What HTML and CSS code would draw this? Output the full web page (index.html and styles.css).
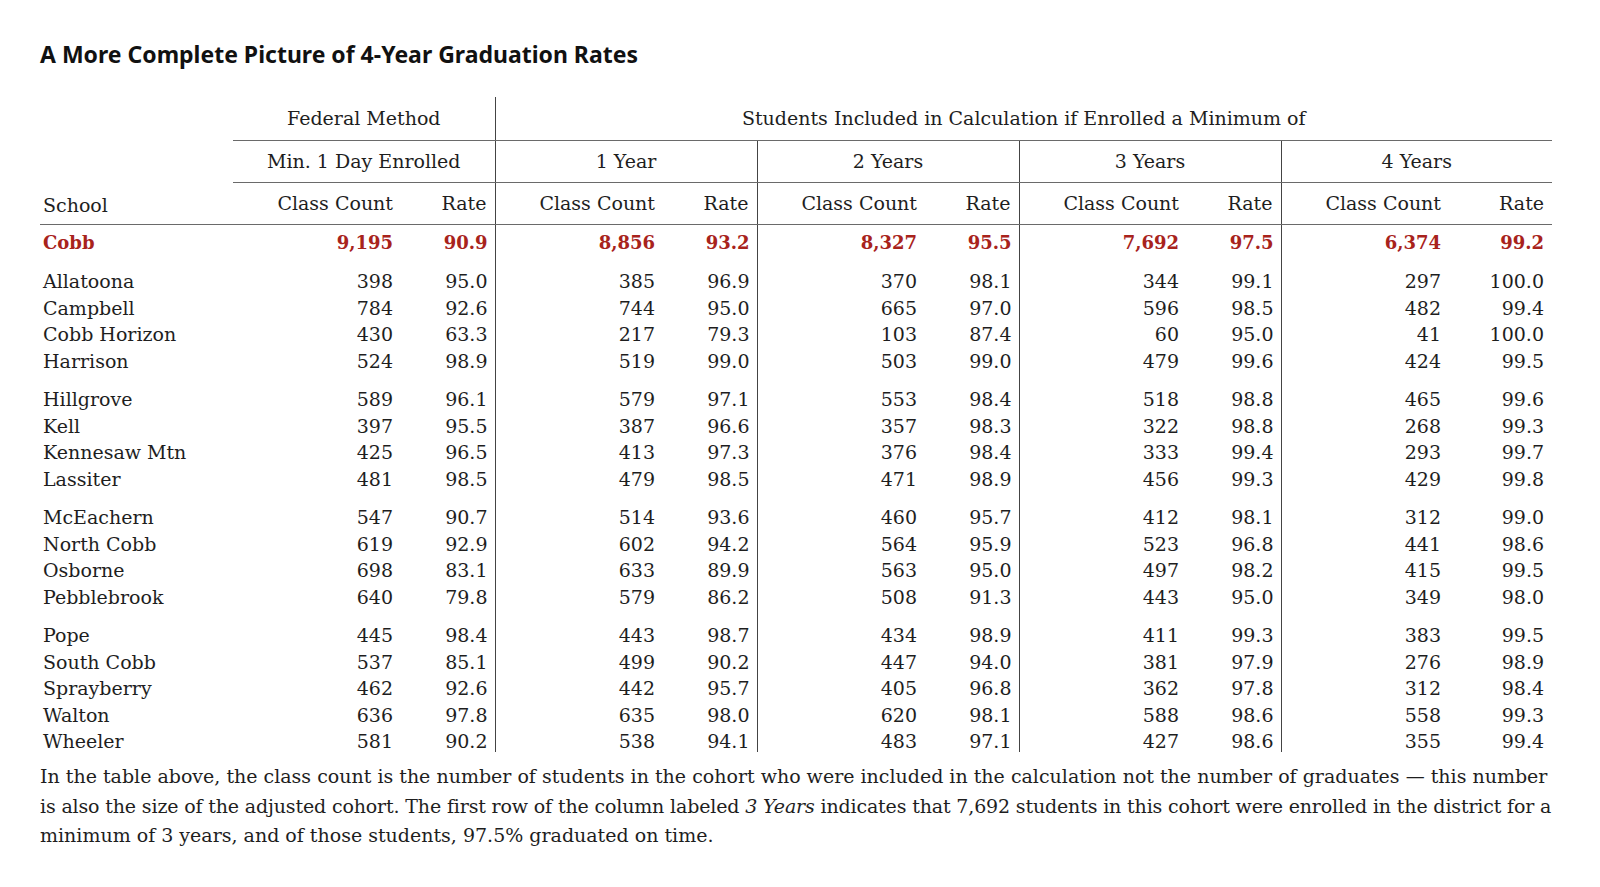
FILE: index.html
```html
<!DOCTYPE html>
<html lang="en">
  <head>
    <meta charset="UTF-8" />
    <title>A More Complete Picture of 4-Year Graduation Rates</title>
    <link rel="stylesheet" href="styles.css">
  </head>
  <body>
    <div class="page">
      <h1>A More Complete Picture of 4-Year Graduation Rates</h1>

      <table class="grad-table">
        <colgroup>
          <col class="c-school">
          <col class="c-count"><col class="c-rate">
          <col class="c-count"><col class="c-rate">
          <col class="c-count"><col class="c-rate">
          <col class="c-count"><col class="c-rate">
          <col class="c-count"><col class="c-rate-last">
        </colgroup>
        <thead>
          <tr class="h1">
            <th class="school" rowspan="3">School</th>
            <th class="grp sep" colspan="2">Federal Method</th>
            <th class="grp" colspan="8">Students Included in Calculation if Enrolled a Minimum of</th>
          </tr>
          <tr class="h2">
            <th class="grp sep" colspan="2">Min. 1 Day Enrolled</th>
            <th class="grp sep" colspan="2">1 Year</th>
            <th class="grp sep" colspan="2">2 Years</th>
            <th class="grp sep" colspan="2">3 Years</th>
            <th class="grp" colspan="2">4 Years</th>
          </tr>
          <tr class="h3">
            <th class="num">Class Count</th><th class="num sep">Rate</th>
            <th class="num">Class Count</th><th class="num sep">Rate</th>
            <th class="num">Class Count</th><th class="num sep">Rate</th>
            <th class="num">Class Count</th><th class="num sep">Rate</th>
            <th class="num">Class Count</th><th class="num">Rate</th>
          </tr>
        </thead>
        <tbody id="rows"></tbody>
      </table>

      <p class="note">In the table above, the class count is the number of students in the cohort who were included in the calculation not the number of graduates — this number<br><span class="tight">is also the size of the adjusted cohort. The first row of the column labeled <em>3 Years</em> indicates that 7,692 students in this cohort were enrolled in the district for a</span><br>minimum of 3 years, and of those students, 97.5% graduated on time.</p>
    </div>

    <script>
      // school, then count/rate pairs for each of the 5 methods
      const data = [
        ["Cobb", "9,195", "90.9", "8,856", "93.2", "8,327", "95.5", "7,692", "97.5", "6,374", "99.2"],
        ["Allatoona", "398", "95.0", "385", "96.9", "370", "98.1", "344", "99.1", "297", "100.0"],
        ["Campbell", "784", "92.6", "744", "95.0", "665", "97.0", "596", "98.5", "482", "99.4"],
        ["Cobb Horizon", "430", "63.3", "217", "79.3", "103", "87.4", "60", "95.0", "41", "100.0"],
        ["Harrison", "524", "98.9", "519", "99.0", "503", "99.0", "479", "99.6", "424", "99.5"],
        ["Hillgrove", "589", "96.1", "579", "97.1", "553", "98.4", "518", "98.8", "465", "99.6"],
        ["Kell", "397", "95.5", "387", "96.6", "357", "98.3", "322", "98.8", "268", "99.3"],
        ["Kennesaw Mtn", "425", "96.5", "413", "97.3", "376", "98.4", "333", "99.4", "293", "99.7"],
        ["Lassiter", "481", "98.5", "479", "98.5", "471", "98.9", "456", "99.3", "429", "99.8"],
        ["McEachern", "547", "90.7", "514", "93.6", "460", "95.7", "412", "98.1", "312", "99.0"],
        ["North Cobb", "619", "92.9", "602", "94.2", "564", "95.9", "523", "96.8", "441", "98.6"],
        ["Osborne", "698", "83.1", "633", "89.9", "563", "95.0", "497", "98.2", "415", "99.5"],
        ["Pebblebrook", "640", "79.8", "579", "86.2", "508", "91.3", "443", "95.0", "349", "98.0"],
        ["Pope", "445", "98.4", "443", "98.7", "434", "98.9", "411", "99.3", "383", "99.5"],
        ["South Cobb", "537", "85.1", "499", "90.2", "447", "94.0", "381", "97.9", "276", "98.9"],
        ["Sprayberry", "462", "92.6", "442", "95.7", "405", "96.8", "362", "97.8", "312", "98.4"],
        ["Walton", "636", "97.8", "635", "98.0", "620", "98.1", "588", "98.6", "558", "99.3"],
        ["Wheeler", "581", "90.2", "538", "94.1", "483", "97.1", "427", "98.6", "355", "99.4"]
      ];
      // rows that start a new block of schools (extra space above)
      const groupStarts = [1, 5, 9, 13];

      const tbody = document.getElementById("rows");
      data.forEach(function (row, i) {
        const tr = document.createElement("tr");
        if (i === 0) tr.className = "total";
        else if (groupStarts.includes(i)) tr.className = "start";
        if (i === data.length - 1) tr.classList.add("last");
        row.forEach(function (val, j) {
          const td = document.createElement("td");
          td.textContent = val;
          if (j === 0) td.className = "school";
          else if (j % 2 === 0 && j < 10) td.className = "num sep";
          else td.className = "num";
          tr.appendChild(td);
        });
        tbody.appendChild(tr);
      });
    </script>
  </body>
</html>
```

FILE: styles.css
```css
* {
  box-sizing: border-box;
}
body {
  margin: 0;
  background-color: white;
  color: #1e1e1e;
  font-family: "DejaVu Serif", "Liberation Serif", serif;
  font-size: 19px;
}
.page {
  padding: 39px 48px 0 40px;
}
h1 {
  font-family: "Noto Sans", "Liberation Sans", sans-serif;
  font-weight: bold;
  font-size: 23px;
  line-height: 30px;
  margin: 0 0 28px 0;
  color: #111;
}
.grad-table {
  width: 1512px;
  table-layout: fixed;
  border-collapse: collapse;
}
.c-school {
  width: 193px;
}
.c-count {
  width: 168px;
}
.c-rate {
  width: 94px;
}
.c-rate-last {
  width: 103px;
}
th {
  font-weight: normal;
  height: 42px;
  padding: 0;
  border-bottom: 1.5px solid #6a6a6a;
  vertical-align: middle;
}
.h1 th {
  height: 43px;
}
th.grp {
  text-align: center;
}
th.school {
  text-align: left;
  vertical-align: bottom;
  padding: 0 0 8px 3px;
}
th.num {
  text-align: right;
  padding-right: 8px;
}
.sep {
  border-right: 1px solid #444;
}
td {
  padding: 0;
  line-height: 26.5px;
  white-space: nowrap;
}
td.school {
  padding-left: 3px;
}
td.num {
  text-align: right;
  padding-right: 8px;
}
td.num.sep {
  padding-right: 7px;
}
tr.total td {
  padding-top: 5px;
  font-weight: bold;
  color: #a8231c;
  font-size: 18px;
}
tr.start td {
  padding-top: 12px;
}
tr.last td {
  line-height: 22px;
  padding-top: 2px;
}
.note {
  margin: 10px 0 0 0;
  line-height: 29.5px;
  white-space: nowrap;
}
.note .tight {
  letter-spacing: -0.15px;
}
.note em {
  font-style: italic;
}
```
